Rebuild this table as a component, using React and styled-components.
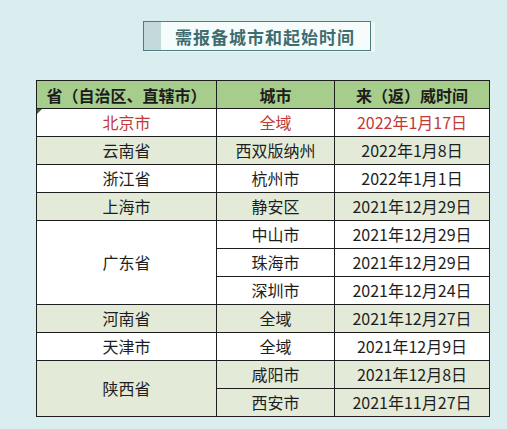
import React from 'react'
import styled, { createGlobalStyle } from 'styled-components'

const GlobalStyle = createGlobalStyle`
  html, body {
    margin: 0;
    padding: 0;
    background: #daeef0;
  }
  body {
    font-family: "Noto Sans CJK SC", "Noto Sans", sans-serif;
  }
`

const Page = styled.div`
  width: 507px;
  height: 429px;
  padding-top: 21px;
  box-sizing: border-box;
  background: #daeef0;
  overflow: hidden;
`

const TitleBox = styled.div`
  margin-left: 143px;
  width: 228px;
  height: 30px;
  box-sizing: border-box;
  border: 1px solid #4e7d7f;
  background: #f6fbfb;
  display: flex;
  align-items: stretch;
  box-shadow: 4px 1px 0 #eef7f7;
`

const TitleStripe = styled.div`
  width: 17px;
  background: #c3d9da;
`

const TitleText = styled.div`
  flex: 1;
  display: flex;
  align-items: center;
  padding-left: 14px;
  font-size: 17px;
  font-weight: 700;
  letter-spacing: 1px;
  white-space: nowrap;
  color: #3e6d70;
`

const Table = styled.table`
  margin: 29px 0 0 36px;
  width: 450px;
  border-collapse: collapse;
  table-layout: fixed;
  border: 1px solid #1e1e1e;
`

const Th = styled.th`
  height: 27px;
  padding: 0;
  border: 1px solid #1e1e1e;
  background: #a7cd8c;
  font-size: 16px;
  font-weight: 700;
  color: #1c1c1c;
  text-align: center;
  width: ${(p) => p.$w}px;
`

const Td = styled.td`
  position: relative;
  height: 27px;
  padding: 0;
  border: 1px solid #1e1e1e;
  background: ${(p) => (p.$shade ? '#e3ebd8' : '#ffffff')};
  color: ${(p) => (p.$red ? '#c23a36' : '#1e1e1e')};
  font-size: 16px;
  line-height: 27px;
  text-align: center;
  white-space: nowrap;
`

const Marker = styled.span`
  position: absolute;
  left: 0;
  top: 0;
  width: 0;
  height: 0;
  border-top: 5px solid #2f6b2f;
  border-right: 5px solid transparent;
`

const rows = [
  { prov: '北京市', cities: [['全域', '2022年1月17日']], shade: false, red: true },
  { prov: '云南省', cities: [['西双版纳州', '2022年1月8日']], shade: true },
  { prov: '浙江省', cities: [['杭州市', '2022年1月1日']], shade: false },
  { prov: '上海市', cities: [['静安区', '2021年12月29日']], shade: true },
  {
    prov: '广东省',
    cities: [
      ['中山市', '2021年12月29日'],
      ['珠海市', '2021年12月29日'],
      ['深圳市', '2021年12月24日'],
    ],
    shade: false,
  },
  { prov: '河南省', cities: [['全域', '2021年12月27日']], shade: true },
  { prov: '天津市', cities: [['全域', '2021年12月9日']], shade: false },
  {
    prov: '陕西省',
    cities: [
      ['咸阳市', '2021年12月8日'],
      ['西安市', '2021年11月27日'],
    ],
    shade: true,
  },
]

const App = () => {
  return (
    <Page>
      <GlobalStyle />
      <TitleBox>
        <TitleStripe />
        <TitleText>需报备城市和起始时间</TitleText>
      </TitleBox>
      <Table>
        <thead>
          <tr>
            <Th $w={179}>省（自治区、直辖市）</Th>
            <Th $w={117}>城市</Th>
            <Th $w={154}>来（返）威时间</Th>
          </tr>
        </thead>
        <tbody>
          {rows.map((r) =>
            r.cities.map(([city, date], i) => (
              <tr key={r.prov + city}>
                {i === 0 && (
                  <Td rowSpan={r.cities.length} $shade={r.shade} $red={r.red}>
                    {r.red && <Marker />}
                    {r.prov}
                  </Td>
                )}
                <Td $shade={r.shade} $red={r.red}>{city}</Td>
                <Td $shade={r.shade} $red={r.red}>{date}</Td>
              </tr>
            ))
          )}
        </tbody>
      </Table>
    </Page>
  )
}

export default App
